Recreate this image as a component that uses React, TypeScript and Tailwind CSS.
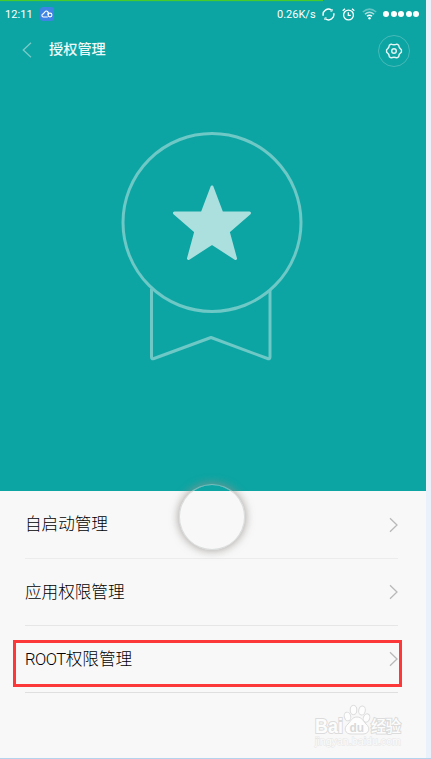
const menuItems = [
    { id: "autostart", prefix: "", label: "自启动管理", line: "border-[#ececec]" },
    { id: "apps", prefix: "", label: "应用权限管理", line: "border-[#e6e6e6]" },
    { id: "root", prefix: "ROOT", label: "权限管理", line: "border-[#dfdfdf]" },
];

const signalDots = [1, 2, 3, 4, 5];

const StatusBar = () => {
    return (
        <div className="flex h-7 items-center justify-between pl-[5px] pr-[7px] text-[11px] leading-none text-white">
            <div className="flex items-center gap-[7px]">
                <span className="w-[28px] whitespace-nowrap tracking-[0.1px]">12:11</span>
                <span className="flex h-[14px] w-[14px] items-center justify-center rounded-[3px] bg-[#3f83e4]">
                    <svg width="12" height="8" viewBox="0 0 12 8" fill="none" stroke="#fff" strokeWidth="1.1">
                        <path d="M6.8 7H2.5C.4 6.6.5 4.2 2.2 3.9L4.6 1.2Q6.4.4 7.6 2.9"/>
                        <circle cx="9" cy="5" r="1.9"/>
                        <path d="M7 2.4V5"/>
                    </svg>
                </span>
            </div>
            <div className="flex items-center">
                <span className="mr-[7px] w-[38px] whitespace-nowrap">0.26K/s</span>
                <svg className="mr-[7px]" width="13" height="13" viewBox="0 0 13 13" fill="none" stroke="#fff" strokeWidth="1.4">
                    <path d="M1.3 7.8A5.3 5.3 0 0 1 9.6 2.2M11.7 5.2A5.3 5.3 0 0 1 3.4 10.8"/>
                    <path d="M10.2 1V3.2H8.4M2.8 12V9.8H4.6" strokeWidth=".8"/>
                </svg>
                <svg className="mr-[7px]" width="13" height="13" viewBox="0 0 13 13" fill="none" stroke="#fff" strokeWidth="1.3">
                    <circle cx="6.5" cy="7" r="4.9"/>
                    <path d="M6.3 4.3v3h2.5M.7 2.8 3 .8M12.3 2.8 10 .8"/>
                </svg>
                <svg className="mr-[6px]" width="15" height="12" viewBox="0 0 15 12" fill="none" stroke="#fff" strokeWidth="1.5">
                    <path d="M.8 4Q7.5-1.8 14.2 4" opacity=".35"/>
                    <path d="M2.9 6.2Q7.5 2.2 12.1 6.2" opacity=".65"/>
                    <path d="M5 8.3Q7.5 6.1 10 8.3"/>
                    <circle cx="7.5" cy="10.2" r="1.2" fill="#fff" stroke="none"/>
                </svg>
                <div className="flex gap-[1.5px]">
                    {signalDots.map((dot) => (
                        <span key={dot} className="h-[6px] w-[6px] rounded-full bg-white"/>
                    ))}
                </div>
            </div>
        </div>
    )
}

const Header = () => {
    return (
        <div className="flex h-[46px] justify-between pl-[22px] pr-[16px]">
            <div className="flex h-[43px] items-center">
                <svg width="10" height="16" viewBox="0 0 10 16" fill="none" stroke="#79cbc9" strokeWidth="1.3">
                    <path d="M9 .8 1.3 8 9 15.2"/>
                </svg>
                <h1 className="ml-[17px] text-[14.2px] font-medium leading-none text-[#eefafa]">授权管理</h1>
            </div>
            <button className="mt-[7px] flex h-8 w-8 items-center justify-center rounded-full border border-[#47bab8]">
                <svg width="18" height="18" viewBox="0 0 18 18" fill="none" stroke="#e3f5f4" strokeWidth="1.4" strokeLinejoin="round">
                    <path d="M6.2 2.1Q9 3.4 11.8 2.1L13.6 3.1Q13.8 6.1 16.4 7.8V10.2Q13.8 11.9 13.6 14.9L11.8 15.9Q9 14.6 6.2 15.9L4.4 14.9Q4.2 11.9 1.6 10.2V7.8Q4.2 6.1 4.4 3.1Z"/>
                    <circle cx="9" cy="9" r="2.3"/>
                </svg>
            </button>
        </div>
    )
}

const Medal = () => {
    return (
        <svg className="ml-[120px] mt-[56px]" width="184" height="232" viewBox="120 130 184 232" fill="none" stroke="#6dc8c6" strokeWidth="3" strokeLinejoin="round">
            <circle cx="212" cy="222.5" r="89"/>
            <path d="M151.5 288.5V357Q151.5 359.5 154 358.5L211 337.5 267.5 358.5Q270 359.5 270 357V290"/>
            <path d="M212 187 221.8 213H249.5L228.2 231.7 235.5 258.5 212 243.2 188.5 258.5 195.8 231.7 174.5 213H202.2Z" fill="#abe0df" stroke="#abe0df"/>
        </svg>
    )
}

const Watermark = () => {
    return (
        <svg className="absolute left-[312px] top-[703px]" width="92" height="48" viewBox="0 0 92 48">
            <g fontFamily="'Liberation Sans', 'Noto Sans CJK SC', sans-serif" fill="#fcfcfc" stroke="#dcdcdc" strokeWidth="2" paintOrder="stroke">
                <text x="3" y="29.5" fontSize="19.5" fontWeight="bold" textLength="28" lengthAdjust="spacingAndGlyphs">Bai</text>
                <text x="59" y="29" fontSize="15.5" fontWeight="500" textLength="30">经验</text>
                <text x="3" y="42" fontSize="10.5" strokeWidth="1" stroke="#e6e6e6" textLength="86" lengthAdjust="spacingAndGlyphs">jingyan.baidu.com</text>
            </g>
            <g fill="#fdfdfd" stroke="#dcdcdc" strokeWidth="1">
                <ellipse cx="35.5" cy="13.5" rx="3.2" ry="4.4" transform="rotate(-15 35.5 13.5)"/>
                <ellipse cx="41.5" cy="7" rx="3.3" ry="4.6"/>
                <ellipse cx="50" cy="7.5" rx="3.3" ry="4.6" transform="rotate(10 50 7.5)"/>
                <ellipse cx="54.5" cy="15" rx="3.2" ry="4.3" transform="rotate(20 54.5 15)"/>
                <path d="M45 14C40 14 39 18 36 21 31 25 33 31 39 31H51C57 31 59 25 54 21 51 18 50 14 45 14Z"/>
            </g>
            <text x="37.5" y="28.5" fontSize="12.5" fontWeight="bold" fontFamily="'Liberation Sans', sans-serif" fill="#d9d9d9" textLength="14.5" lengthAdjust="spacingAndGlyphs">du</text>
        </svg>
    )
}

const App = () => {
    return (
        <div className="h-[759px] w-[431px] overflow-hidden border-b border-[#b5d3ec] bg-[#ebf1fa] font-['Roboto','Noto_Sans_CJK_SC',sans-serif]">
            <div className="relative h-[758px] w-[426px] bg-[#f8f8f8]">
                <div className="h-[491px] bg-[#0ca5a3]">
                    <div className="absolute left-0 top-0 h-px w-[323px] bg-[#48cc2c] shadow-[0_1px_1px_#2cb46455]"/>
                    <StatusBar/>
                    <Header/>
                    <Medal/>
                </div>

                <ul className="pl-[25px] pr-[28px]">
                    {menuItems.map((item) => (
                        <li key={item.id} className={`flex h-[67px] items-center justify-between border-b first:h-[68px] ${item.line}`}>
                            <span className="pt-[2px] text-[16.6px] font-light leading-none text-black">
                                <span className="tracking-[-0.5px]">{item.prefix}</span>{item.label}
                            </span>
                            <svg width="9" height="16" viewBox="0 0 9 16" fill="none" stroke="#b9b9b9" strokeWidth="1.3">
                                <path d="M1 1.2 8 8 1 14.8"/>
                            </svg>
                        </li>
                    ))}
                </ul>

                {/* floating touch button, its top edge is clear over the teal area */}
                <div className="absolute left-[179px] top-[484px] h-[66px] w-[66px] rounded-full shadow-[0_0_8px_1px_rgba(150,144,140,0.75)]">
                    <div className="h-full w-full overflow-hidden rounded-full border border-[#c8cccc]/60 bg-[#f8f8f8] bg-clip-padding">
                        <div className="h-[6px] bg-[#0ca5a3]"/>
                    </div>
                </div>

                <div className="absolute left-[13px] top-[640px] h-[47px] w-[389px] border-3 border-[#fd3838]"/>
                <Watermark/>
            </div>
        </div>
    )
}

export default App;
